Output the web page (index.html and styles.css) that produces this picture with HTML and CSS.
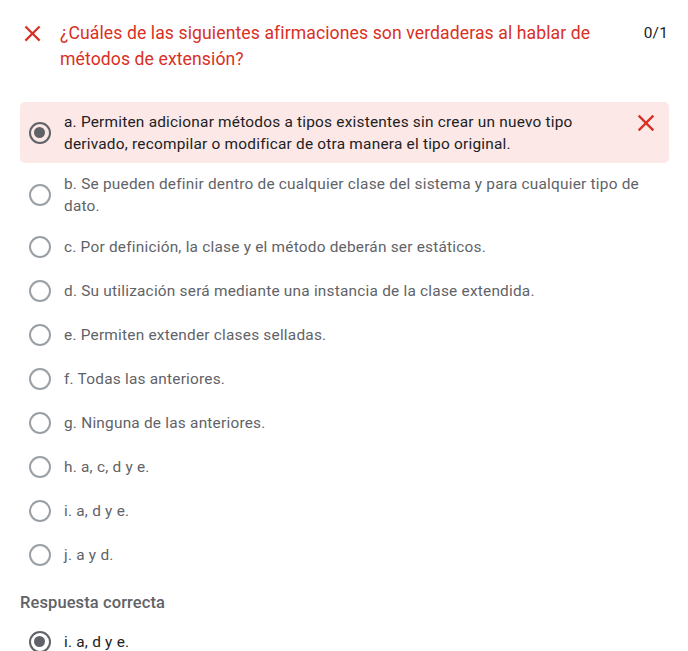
FILE: index.html
```html
<!DOCTYPE html>
<html lang="es">
<head>
<meta charset="utf-8">
<link rel="stylesheet" href="styles.css">
</head>
<body>
<div class="question">
  <div class="header">
    <svg class="x-icon" width="27" height="27" viewBox="0 0 24 24"><path d="M19 6.41 17.59 5 12 10.59 6.41 5 5 6.41 10.59 12 5 17.59 6.41 19 12 13.41 17.59 19 19 17.59 13.41 12z" fill="#d93025"/></svg>
    <div class="title">¿Cuáles de las siguientes afirmaciones son verdaderas al hablar de métodos de extensión?</div>
    <div class="score">0/1</div>
  </div>
  <div class="options">
    <div class="option wrong">
      <span class="radio checked"></span>
      <span class="label">a. Permiten adicionar métodos a tipos existentes sin crear un nuevo tipo derivado, recompilar o modificar de otra manera el tipo original.</span>
      <svg class="x-small" width="28" height="28" viewBox="0 0 24 24"><path d="M19 6.41 17.59 5 12 10.59 6.41 5 5 6.41 10.59 12 5 17.59 6.41 19 12 13.41 17.59 19 19 17.59 13.41 12z" fill="#d93025"/></svg>
    </div>
    <div class="option two">
      <span class="radio"></span>
      <span class="label">b. Se pueden definir dentro de cualquier clase del sistema y para cualquier tipo de dato.</span>
    </div>
    <div class="option"><span class="radio"></span><span class="label">c. Por definición, la clase y el método deberán ser estáticos.</span></div>
    <div class="option"><span class="radio"></span><span class="label">d. Su utilización será mediante una instancia de la clase extendida.</span></div>
    <div class="option"><span class="radio"></span><span class="label">e. Permiten extender clases selladas.</span></div>
    <div class="option"><span class="radio"></span><span class="label">f. Todas las anteriores.</span></div>
    <div class="option"><span class="radio"></span><span class="label">g. Ninguna de las anteriores.</span></div>
    <div class="option"><span class="radio"></span><span class="label">h. a, c, d y e.</span></div>
    <div class="option"><span class="radio"></span><span class="label">i. a, d y e.</span></div>
    <div class="option"><span class="radio"></span><span class="label">j. a y d.</span></div>
  </div>
  <div class="correct-title">Respuesta correcta</div>
  <div class="option correct"><span class="radio checked"></span><span class="label">i. a, d y e.</span></div>
</div>
</body>
</html>
```
FILE: styles.css
```css
html, body {
  margin: 0;
  padding: 0;
  background: #ffffff;
}
body {
  font-family: Roboto, "Noto Sans", Arial, sans-serif;
  color: #202124;
}
.question {
  padding: 20px 19px 0 20px;
}
.header {
  display: flex;
  align-items: flex-start;
}
.x-icon {
  flex: none;
  margin: 0 14px 0 -1px;
}
.title {
  flex: 1;
  font-size: 17.6px;
  line-height: 26.4px;
  color: #d93025;
  letter-spacing: 0.1px;
  padding-right: 40px;
}
.score {
  flex: none;
  font-size: 15.4px;
  line-height: 26.4px;
  letter-spacing: 0.2px;
  color: #202124;
  margin-right: 1px;
}
.options {
  display: flex;
  flex-direction: column;
  margin-top: 29px;
}
.option {
  display: flex;
  align-items: center;
  padding: 11px 0 11px 9px;
}
.option.wrong {
  background: #fce8e6;
  border-radius: 5px;
  padding: 9px 9px 8px 9px;
  margin-bottom: -1px;
}
.option.two {
  padding-bottom: 8px;
}
.radio {
  flex: none;
  box-sizing: border-box;
  width: 22px;
  height: 22px;
  border: 2.2px solid #9aa0a6;
  border-radius: 50%;
  margin-right: 13px;
  position: relative;
}
.radio.checked {
  border-color: #5f6368;
}
.radio.checked::after {
  content: "";
  position: absolute;
  left: 3.3px;
  top: 3.3px;
  width: 11px;
  height: 11px;
  border-radius: 50%;
  background: #5f6368;
}
.label {
  flex: 1;
  font-size: 15.4px;
  line-height: 22px;
  letter-spacing: 0.22px;
  color: #5f6368;
}
.wrong .label,
.correct .label {
  color: #202124;
}
.wrong .label {
  padding-right: 50px;
}
.x-small {
  flex: none;
  align-self: flex-start;
  margin-top: -2px;
}
.correct-title {
  font-size: 16.5px;
  font-weight: 500;
  color: #5f6368;
  line-height: 26px;
  margin-top: 13px;
  letter-spacing: 0.1px;
}
.option.correct {
  padding-top: 15px;
}
```
